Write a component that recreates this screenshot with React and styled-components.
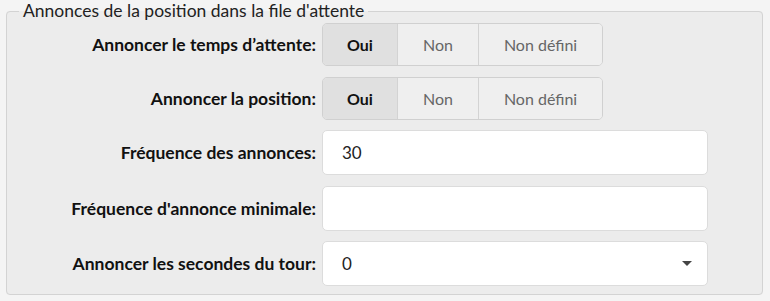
import React from "react";
import styled, { createGlobalStyle } from "styled-components";

const GlobalStyle = createGlobalStyle`
  html, body {
    margin: 0;
    padding: 0;
    background: #f4f4f4;
    font-family: Lato, "Liberation Sans", sans-serif;
    color: #1a1a1a;
  }
`;

const Page = styled.div`
  padding: 0 6px 0 6px;
`;

const Fieldset = styled.fieldset`
  margin: 0;
  padding: 0 0 8px 0;
  background: #ececec;
  border: 1px solid #d3d3d3;
  border-radius: 4px;
  width: 757px;
  box-sizing: border-box;
`;

const Legend = styled.legend`
  margin-left: 12px;
  padding: 0 4px 0 4px;
  font-size: 17.5px;
  line-height: 22px;
  color: #222;
`;

const Grid = styled.div`
  display: grid;
  grid-template-columns: 309px 386px;
  column-gap: 6px;
  row-gap: 10.5px;
  align-items: center;
  margin-top: 1px;
`;

const Label = styled.label`
  text-align: right;
  font-weight: 700;
  font-size: 17.5px;
  color: #111;
`;

const Group = styled.div`
  display: inline-flex;
  justify-self: start;
  height: 43px;
  border: 1px solid #d0d0d0;
  border-radius: 5px;
  overflow: hidden;
  box-sizing: border-box;
`;

const Segment = styled.button`
  font-family: inherit;
  font-size: 16px;
  padding: 0 ${(p) => (p.$active ? 24 : 25)}px;
  border: 0;
  border-left: 1px solid #d3d3d3;
  &:first-child {
    border-left: 0;
  }
  background: ${(p) => (p.$active ? "#e0e0e0" : "#efefef")};
  color: ${(p) => (p.$active ? "#111" : "#666")};
  font-weight: ${(p) => (p.$active ? 700 : 400)};
  cursor: pointer;
`;

const Input = styled.input`
  height: 45px;
  box-sizing: border-box;
  width: 100%;
  border: 1px solid #dcdcdc;
  border-radius: 5px;
  background: #fff;
  padding: 0 19px;
  font-family: inherit;
  font-size: 17px;
  color: #222;
  outline: 0;
`;

const SelectBox = styled.div`
  height: 45px;
  box-sizing: border-box;
  border: 1px solid #dcdcdc;
  border-radius: 5px;
  background: #fff;
  padding: 0 19px;
  display: flex;
  align-items: center;
  justify-content: space-between;
  font-size: 17px;
  color: #222;
`;

const Caret = styled.span`
  width: 0;
  height: 0;
  border-left: 5px solid transparent;
  border-right: 5px solid transparent;
  border-top: 5px solid #444;
  margin-right: -4px;
`;

const Choice = ({ value }) => (
  <Group>
    {["Oui", "Non", "Non défini"].map((opt) => (
      <Segment key={opt} $active={opt === value}>
        {opt}
      </Segment>
    ))}
  </Group>
);

export default function App() {
  return (
    <Page>
      <GlobalStyle />
      <Fieldset>
        <Legend>Annonces de la position dans la file d'attente</Legend>
        <Grid>
          <Label>Annoncer le temps d’attente:</Label>
          <Choice value="Oui" />
          <Label>Annoncer la position:</Label>
          <Choice value="Oui" />
          <Label>Fréquence des annonces:</Label>
          <Input defaultValue="30" />
          <Label>Fréquence d'annonce minimale:</Label>
          <Input defaultValue="" />
          <Label>Annoncer les secondes du tour:</Label>
          <SelectBox>
            <span>0</span>
            <Caret />
          </SelectBox>
        </Grid>
      </Fieldset>
    </Page>
  );
}
